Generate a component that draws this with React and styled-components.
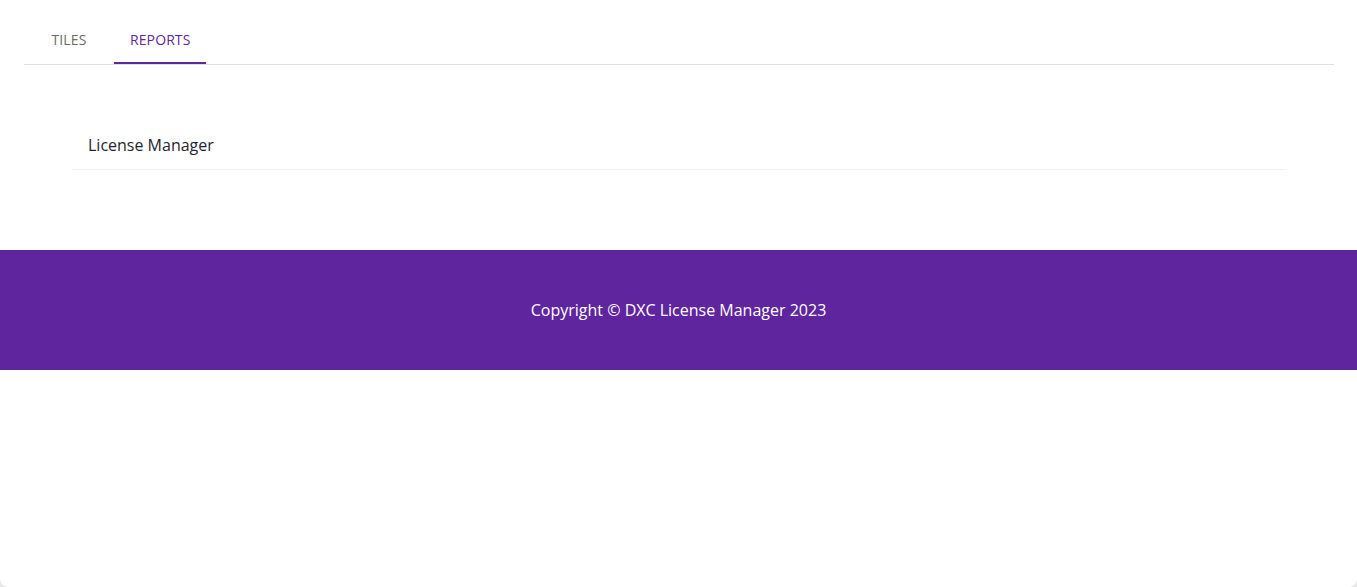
import React, { useState } from "react";
import styled, { createGlobalStyle } from "styled-components";

const GlobalStyle = createGlobalStyle`
  html, body {
    margin: 0;
    padding: 0;
    background: #ececec;
    font-family: "Open Sans", "Noto Sans", sans-serif;
  }
  * { box-sizing: border-box; }
`;

const Shell = styled.div`
  min-height: 587px;
  background: #ffffff;
  border-radius: 0 0 8px 8px;
  box-shadow: 0 1px 3px rgba(0, 0, 0, 0.06);
  overflow: hidden;
`;

const Main = styled.main`
  padding: 16px 23px 0 24px;
`;

const TabBar = styled.div`
  display: flex;
  border-bottom: 1px solid #e0e0e0;
`;

const Tab = styled.button`
  min-width: 90px;
  height: 48px;
  padding: 0 16px;
  border: none;
  background: none;
  font-family: inherit;
  font-size: 14px;
  letter-spacing: 0.1px;
  text-transform: uppercase;
  color: ${(p) => (p.$active ? "#5f259f" : "#6b6b60")};
  border-bottom: 2px solid ${(p) => (p.$active ? "#5f259f" : "transparent")};
  cursor: pointer;
`;

const ReportList = styled.ul`
  list-style: none;
  margin: 56px 48px 80px 48px;
  padding: 0;
`;

const ReportItem = styled.li`
  padding: 0 16px;
  height: 49px;
  display: flex;
  align-items: center;
  font-size: 16px;
  color: #1f2430;
  border-bottom: 1px solid #f1f1f1;
`;

const Footer = styled.footer`
  height: 120px;
  background: #5f259f;
  color: #ffffff;
  display: flex;
  align-items: center;
  justify-content: center;
  font-size: 16px;
`;

const App = () => {
  const [tab, setTab] = useState("reports");

  return (
    <>
      <GlobalStyle />
      <Shell>
        <Main>
          <TabBar>
            <Tab $active={tab === "tiles"} onClick={() => setTab("tiles")}>Tiles</Tab>
            <Tab $active={tab === "reports"} onClick={() => setTab("reports")}>Reports</Tab>
          </TabBar>
          <ReportList>
            <ReportItem>License Manager</ReportItem>
          </ReportList>
        </Main>
        <Footer>Copyright © DXC License Manager 2023</Footer>
      </Shell>
    </>
  );
};

export default App;
